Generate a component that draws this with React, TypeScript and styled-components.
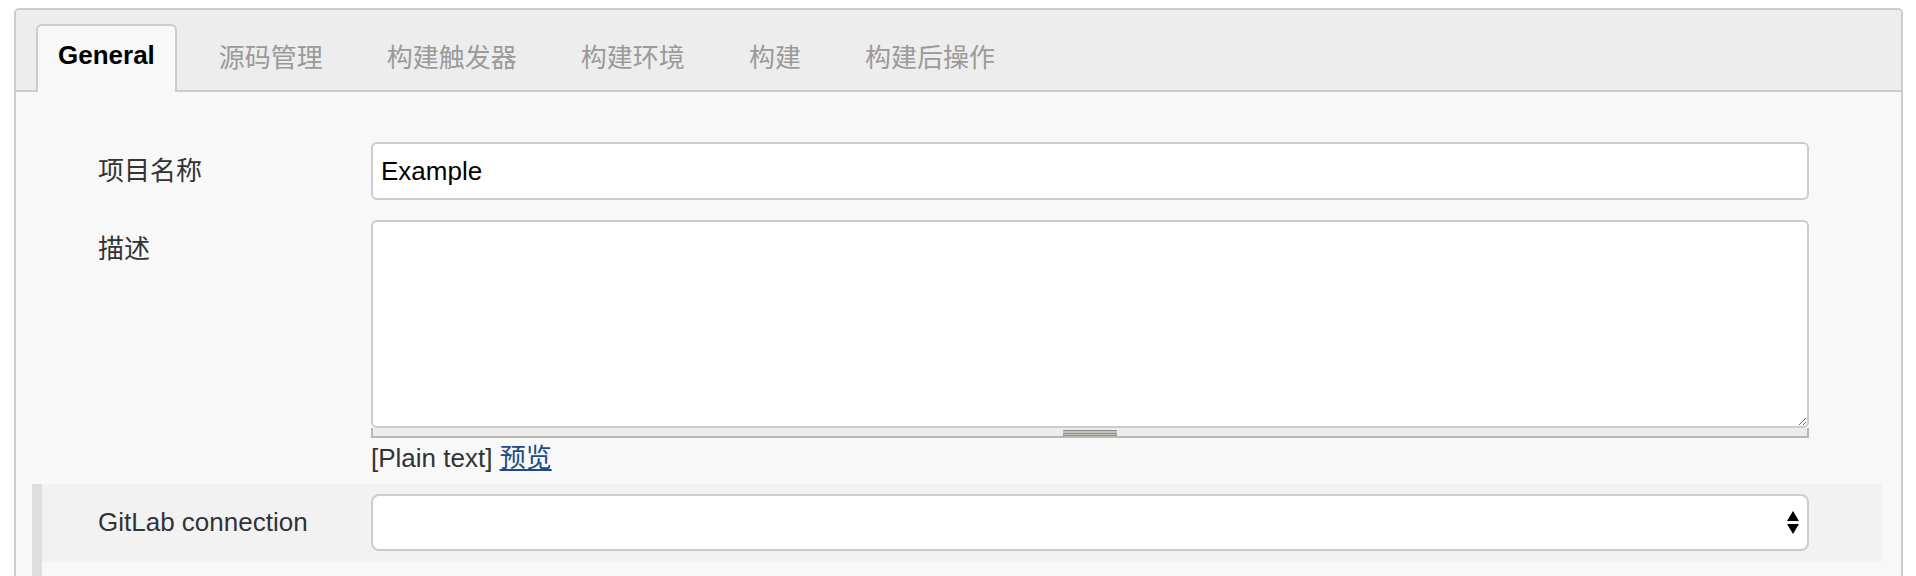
import React from "react";
import styled, { createGlobalStyle } from "styled-components";

const GlobalStyle = createGlobalStyle`
  html, body { margin: 0; padding: 0; background: #ffffff; }
  body { font-family: "Liberation Sans", "Noto Sans CJK SC", Arial, sans-serif; }
  * { box-sizing: border-box; }
`;

const Page = styled.div`
  padding: 8px 13px 0 14px;
`;

const Panel = styled.div`
  border: 2px solid #cccccc;
  border-radius: 5px;
  background: #f8f8f8;
  overflow: hidden;
`;

const TabBar = styled.div`
  display: flex;
  align-items: flex-end;
  gap: 20px;
  height: 82px;
  padding: 14px 20px 0 20px;
  background: #ededed;
  border-bottom: 2px solid #cccccc;
`;

const Tab = styled.div<{ $active?: boolean }>`
  display: flex;
  align-items: center;
  height: 68px;
  margin-bottom: -2px;
  padding: 0 20px 7px 20px;
  border: 2px solid ${(p) => (p.$active ? "#cccccc" : "transparent")};
  border-bottom: none;
  border-radius: 6px 6px 0 0;
  background: ${(p) => (p.$active ? "#f8f8f8" : "transparent")};
  color: ${(p) => (p.$active ? "#000000" : "#9a9a9a")};
  font-size: 26px;
  font-weight: ${(p) => (p.$active ? 700 : 400)};
  white-space: nowrap;
`;

const Content = styled.div`
  padding: 50px 19px 60px 16px;
`;

const Block = styled.div<{ $bar?: boolean }>`
  border-left: 10px solid ${(p) => (p.$bar ? "#dedede" : "transparent")};
`;

const Row = styled.div<{ $highlight?: boolean; $gap?: number }>`
  display: flex;
  align-items: flex-start;
  background: ${(p) => (p.$highlight ? "#f2f2f2" : "transparent")};
  padding: ${(p) => (p.$highlight ? "10px 0 11px 0" : "0")};
  margin-bottom: ${(p) => p.$gap ?? 0}px;
`;

const Label = styled.div<{ $h: number }>`
  flex: 0 0 329px;
  padding-left: 56px;
  line-height: ${(p) => p.$h}px;
  font-size: 26px;
  color: #333333;
`;

const Field = styled.div`
  flex: 1;
  margin-right: 73px;
  position: relative;
`;

const TextInput = styled.input`
  display: block;
  width: 100%;
  height: 58px;
  padding: 0 8px;
  border: 2px solid #cccccc;
  border-radius: 6px;
  background: #ffffff;
  font-family: "Liberation Sans", "Noto Sans CJK SC", Arial, sans-serif;
  font-size: 26px;
  color: #000000;
  outline: none;
`;

const TextArea = styled.textarea`
  display: block;
  width: 100%;
  height: 208px;
  margin: 0;
  padding: 8px;
  border: 2px solid #cccccc;
  border-radius: 6px;
  background: #ffffff;
  font-family: "Liberation Sans", "Noto Sans CJK SC", Arial, sans-serif;
  font-size: 26px;
  resize: vertical;
  outline: none;
`;

const Grippie = styled.div`
  display: flex;
  justify-content: center;
  height: 10px;
  padding-top: 2px;
  background: #ececec;
  border: 2px solid #b9b9b2;
  border-top: none;
`;

const GripHandle = styled.div`
  width: 54px;
  height: 6px;
  background: linear-gradient(
    #8c8c88 0 1px,
    #c4c4c0 1px 3px,
    #8c8c88 3px 4px,
    #c4c4c0 4px 5px,
    #8c8c88 5px 6px
  );
`;

const Help = styled.div`
  line-height: 40px;
  margin-bottom: 6px;
  font-size: 26px;
  color: #333333;
`;

const Link = styled.a`
  color: #204a87;
  text-decoration: underline;
`;

const Select = styled.select`
  display: block;
  width: 100%;
  height: 57px;
  padding: 0 40px 0 8px;
  border: 2px solid #cccccc;
  border-radius: 8px;
  background: #ffffff;
  appearance: none;
  -webkit-appearance: none;
  font-family: "Liberation Sans", "Noto Sans CJK SC", Arial, sans-serif;
  font-size: 26px;
  outline: none;
`;

const SelectArrows = styled.svg`
  position: absolute;
  right: 10px;
  top: 17px;
  pointer-events: none;
`;

const Spacer = styled.div`
  height: 60px;
`;

const tabs = ["General", "源码管理", "构建触发器", "构建环境", "构建", "构建后操作"];

export default function App() {
  return (
    <>
      <GlobalStyle />
      <Page>
        <Panel>
          <TabBar>
            {tabs.map((t, i) => (
              <Tab key={t} $active={i === 0}>
                {t}
              </Tab>
            ))}
          </TabBar>
          <Content>
            <Block>
              <Row $gap={20}>
                <Label $h={58}>项目名称</Label>
                <Field>
                  <TextInput defaultValue="Example" />
                </Field>
              </Row>
              <Row>
                <Label $h={58}>描述</Label>
                <Field>
                  <TextArea />
                  <Grippie>
                    <GripHandle />
                  </Grippie>
                  <Help>
                    [Plain text] <Link href="#">预览</Link>
                  </Help>
                </Field>
              </Row>
            </Block>
            <Block $bar>
              <Row $highlight>
                <Label $h={57}>GitLab connection</Label>
                <Field>
                  <Select defaultValue="">
                    <option value=""></option>
                  </Select>
                  <SelectArrows width="12" height="23" viewBox="0 0 12 23">
                    <polygon points="0,10 6,0 12,10" fill="#000" />
                    <polygon points="0,13 12,13 6,23" fill="#000" />
                  </SelectArrows>
                </Field>
              </Row>
              <Spacer />
            </Block>
          </Content>
        </Panel>
      </Page>
    </>
  );
}
